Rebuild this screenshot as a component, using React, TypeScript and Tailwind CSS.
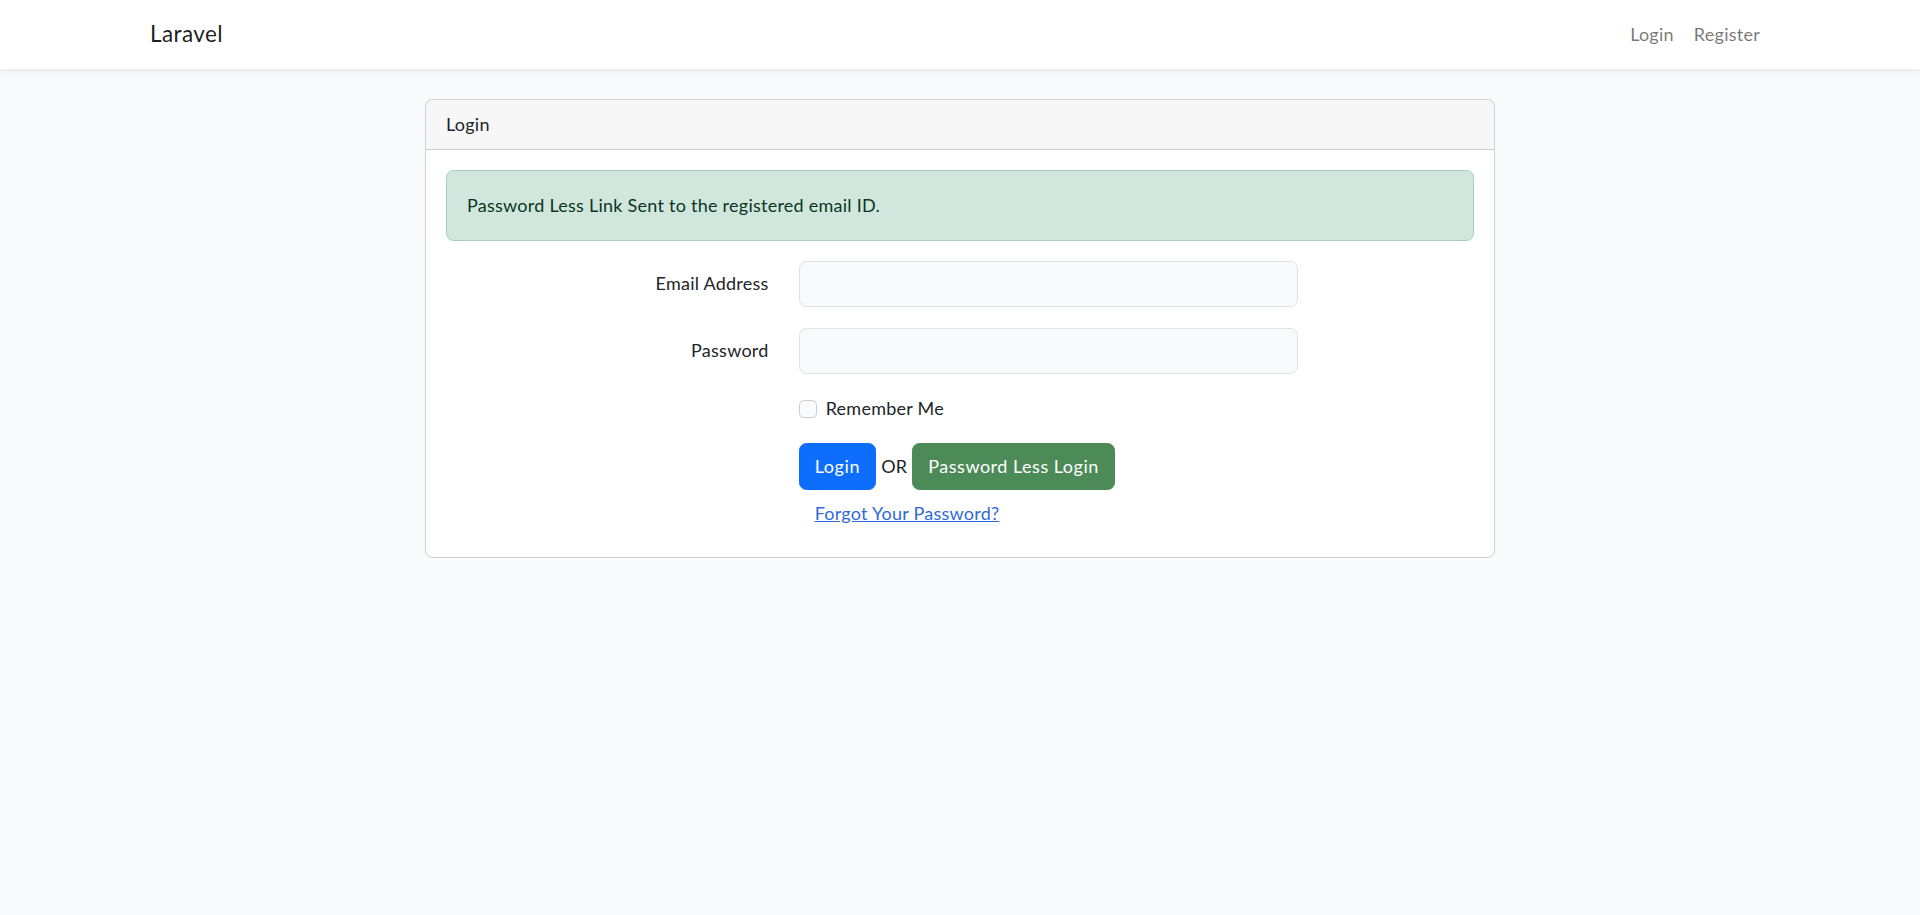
export default function App() {
  return (
    <div className="min-h-screen bg-[#f8fafc] font-['Lato','Noto_Sans',sans-serif] text-[18px] leading-[1.6] tracking-[0.25px] text-[#212529]">
      <nav className="bg-white py-[10px] shadow-[0_2.5px_5px_rgba(0,0,0,0.075)]">
        <div className="mx-auto flex w-[1650px] items-center justify-between px-[15px]">
          <a href="#" className="py-[6.25px] text-[22.5px] leading-[36px] tracking-[0.4px] text-[rgba(0,0,0,0.9)]">
            Laravel
          </a>
          <ul className="flex">
            <li>
              <a href="#" className="block p-[10px] text-[rgba(0,0,0,0.55)]">
                Login
              </a>
            </li>
            <li>
              <a href="#" className="block p-[10px] text-[rgba(0,0,0,0.55)]">
                Register
              </a>
            </li>
          </ul>
        </div>
      </nav>

      <main className="py-[30px]">
        <div className="mx-auto w-[1070px] rounded-[7.5px] border border-[rgba(0,0,0,0.175)] bg-white">
          <div className="h-[50px] rounded-t-[6.5px] border-b border-[rgba(0,0,0,0.175)] bg-[rgba(0,0,0,0.03)] px-[20px] py-[10px] leading-[29px]">
            Login
          </div>

          <div className="px-[20px] pt-[20px] pb-[20px]">
            <div className="mb-[20px] flex h-[71px] items-center rounded-[7.5px] border border-[#a3cfbb] bg-[#d1e7dd] px-[20px] text-[#0a3622]">
              Password Less Link Sent to the registered email ID.
            </div>

            <form onSubmit={(e) => e.preventDefault()}>
              <div className="mb-[20.5px] flex gap-[30px]">
                <label className="w-[322.67px] py-[8.5px] text-right">Email Address</label>
                <input
                  type="email"
                  className="h-[46.5px] w-[499px] rounded-[7.5px] border border-[#dee2e6] bg-[#f8fafc] px-[15px] outline-none"
                />
              </div>

              <div className="mb-[20px] flex gap-[30px]">
                <label className="w-[322.67px] py-[8.5px] text-right">Password</label>
                <input
                  type="password"
                  className="h-[46.5px] w-[499px] rounded-[7.5px] border border-[#dee2e6] bg-[#f8fafc] px-[15px] outline-none"
                />
              </div>

              <div className="mb-[20px] ml-[352.67px]">
                <div className="mb-[2.5px] flex min-h-[28.8px] items-start gap-[9px]">
                  <input
                    type="checkbox"
                    className="mt-[6px] h-[18px] w-[18px] appearance-none rounded-[4.5px] border border-[#c9cdd2] bg-[#f8fafc]"
                  />
                  <label className="leading-[28.8px]">Remember Me</label>
                </div>
              </div>

              <div className="ml-[352.67px]">
                <div className="flex items-center">
                  <button
                    type="submit"
                    className="h-[46.8px] rounded-[7.5px] border border-[#0d6efd] bg-[#0d6efd] px-[15px] tracking-[0.6px] text-white"
                  >
                    Login
                  </button>
                  <span className="px-[5px]">OR</span>
                  <button
                    type="button"
                    className="h-[46.8px] rounded-[7.5px] border border-[#4c8b57] bg-[#4c8b57] px-[15px] tracking-[0.5px] text-white"
                  >
                    Password Less Login
                  </button>
                </div>
                <a
                  href="#"
                  className="inline-flex h-[46.8px] items-center border border-transparent px-[15px] text-[#2f6ad9] underline"
                >
                  Forgot Your Password?
                </a>
              </div>
            </form>
          </div>
        </div>
      </main>
    </div>
  );
}
